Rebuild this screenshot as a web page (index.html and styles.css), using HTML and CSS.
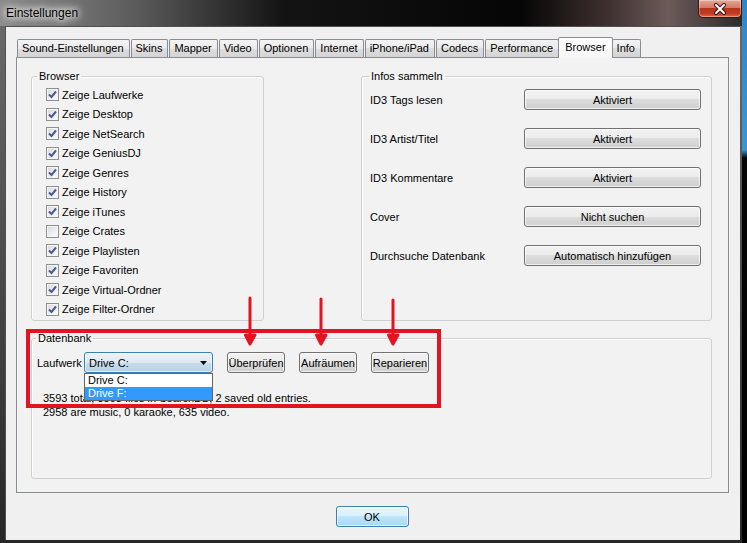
FILE: index.html
```html
<!DOCTYPE html>
<html lang="de">
<head>
    <meta charset="UTF-8">
    <meta name="viewport" content="width=device-width, initial-scale=1.0">
    <title>Einstellungen</title>
    <link rel="stylesheet" href="styles.css">
</head>
<body>
    <div class="window">
        <div class="titlebar">
            <span class="title">Einstellungen</span>
            <button class="close-btn" aria-label="Schließen">
                <svg width="16" height="12" viewBox="0 0 16 12">
                    <path d="M4 2 L12 10 M12 2 L4 10" stroke="#3b1512" stroke-width="4" stroke-linecap="round"/>
                    <path d="M4 2 L12 10 M12 2 L4 10" stroke="#fff" stroke-width="2" stroke-linecap="round"/>
                </svg>
            </button>
        </div>

        <div class="frame">
            <div class="client">
                <ul class="tabs">
                    <li class="tab">Sound-Einstellungen</li>
                    <li class="tab">Skins</li>
                    <li class="tab">Mapper</li>
                    <li class="tab">Video</li>
                    <li class="tab">Optionen</li>
                    <li class="tab">Internet</li>
                    <li class="tab">iPhone/iPad</li>
                    <li class="tab">Codecs</li>
                    <li class="tab">Performance</li>
                    <li class="tab active">Browser</li>
                    <li class="tab">Info</li>
                </ul>

                <div class="panel">
                    <div class="top-row">
                        <fieldset class="group browser-group">
                            <legend>Browser</legend>
                            <label class="check-row"><span class="check"><svg viewBox="0 0 11 11"><path d="M2 5.5 L4.5 8 L9 2.5"/></svg></span>Zeige Laufwerke</label>
                            <label class="check-row"><span class="check"><svg viewBox="0 0 11 11"><path d="M2 5.5 L4.5 8 L9 2.5"/></svg></span>Zeige Desktop</label>
                            <label class="check-row"><span class="check"><svg viewBox="0 0 11 11"><path d="M2 5.5 L4.5 8 L9 2.5"/></svg></span>Zeige NetSearch</label>
                            <label class="check-row"><span class="check"><svg viewBox="0 0 11 11"><path d="M2 5.5 L4.5 8 L9 2.5"/></svg></span>Zeige GeniusDJ</label>
                            <label class="check-row"><span class="check"><svg viewBox="0 0 11 11"><path d="M2 5.5 L4.5 8 L9 2.5"/></svg></span>Zeige Genres</label>
                            <label class="check-row"><span class="check"><svg viewBox="0 0 11 11"><path d="M2 5.5 L4.5 8 L9 2.5"/></svg></span>Zeige History</label>
                            <label class="check-row"><span class="check"><svg viewBox="0 0 11 11"><path d="M2 5.5 L4.5 8 L9 2.5"/></svg></span>Zeige iTunes</label>
                            <label class="check-row"><span class="check"></span>Zeige Crates</label>
                            <label class="check-row"><span class="check"><svg viewBox="0 0 11 11"><path d="M2 5.5 L4.5 8 L9 2.5"/></svg></span>Zeige Playlisten</label>
                            <label class="check-row"><span class="check"><svg viewBox="0 0 11 11"><path d="M2 5.5 L4.5 8 L9 2.5"/></svg></span>Zeige Favoriten</label>
                            <label class="check-row"><span class="check"><svg viewBox="0 0 11 11"><path d="M2 5.5 L4.5 8 L9 2.5"/></svg></span>Zeige Virtual-Ordner</label>
                            <label class="check-row"><span class="check"><svg viewBox="0 0 11 11"><path d="M2 5.5 L4.5 8 L9 2.5"/></svg></span>Zeige Filter-Ordner</label>
                        </fieldset>

                        <fieldset class="group infos-group">
                            <legend>Infos sammeln</legend>
                            <div class="info-row"><span>ID3 Tags lesen</span><button class="btn wide">Aktiviert</button></div>
                            <div class="info-row"><span>ID3 Artist/Titel</span><button class="btn wide">Aktiviert</button></div>
                            <div class="info-row"><span>ID3 Kommentare</span><button class="btn wide">Aktiviert</button></div>
                            <div class="info-row"><span>Cover</span><button class="btn wide">Nicht suchen</button></div>
                            <div class="info-row"><span>Durchsuche Datenbank</span><button class="btn wide">Automatisch hinzufügen</button></div>
                        </fieldset>
                    </div>

                    <fieldset class="group db-group">
                        <legend>Datenbank</legend>
                        <div class="db-row">
                            <span class="db-label">Laufwerk</span>
                            <div class="combo">
                                <span class="combo-value">Drive C:</span>
                                <svg class="combo-arrow" width="7" height="4" viewBox="0 0 7 4"><path d="M0 0 H7 L3.5 4 Z" fill="#000"/></svg>
                                <ul class="combo-list">
                                    <li>Drive C:</li>
                                    <li class="selected">Drive F:</li>
                                </ul>
                            </div>
                            <button class="btn small">Überprüfen</button>
                            <button class="btn small">Aufräumen</button>
                            <button class="btn small">Reparieren</button>
                        </div>
                        <p class="db-stats">3593 total, 3593 files in SearchDB, 2 saved old entries.<br>2958 are music, 0 karaoke, 635 video.</p>
                    </fieldset>
                </div>

                <div class="footer">
                    <button class="btn default">OK</button>
                </div>
            </div>
        </div>

        <!-- red markup drawn on top of the dialog -->
        <svg class="markup" width="747" height="543" viewBox="0 0 747 543">
            <rect x="28" y="331" width="411" height="75" fill="none" stroke="#e3141f" stroke-width="4"/>
            <g stroke="#e3141f" fill="#e3141f" stroke-width="3" stroke-linecap="round" stroke-linejoin="round">
                <path d="M250 298 V336"/>
                <path d="M245.5 335 H255 L250 344 Z"/>
                <path d="M321 299 V336"/>
                <path d="M316.5 335 H326 L321 344 Z"/>
                <path d="M393 300 V336"/>
                <path d="M388.5 335 H398 L393 344 Z"/>
            </g>
        </svg>
    </div>
</body>
</html>
```

FILE: styles.css
```css
body {
    margin: 0;
    width: 747px;
    height: 543px;
    overflow: hidden;
    background: linear-gradient(180deg, #2f86c4 0, #3a96d2 150px, #050505 158px, #000 100%);
    font-family: "Liberation Sans", Arial, sans-serif;
    font-size: 11px;
    color: #000;
}
.window {
    position: relative;
    width: 742px;
    height: 543px;
    background: linear-gradient(180deg, #6d6d6d 0, #4a4a4a 50%, #262626 100%);
}
.titlebar {
    height: 26px;
    display: flex;
    justify-content: space-between;
    align-items: flex-start;
    padding-left: 6px;
    box-sizing: border-box;
    background: linear-gradient(90deg, #8c8c8c 0, #5c5c5c 18%, #141414 38%, #050505 70%, #3e3130 82%, #6d5b59 90%, #2b2b2b 100%);
}
.title {
    margin-top: 6px;
    font-size: 12px;
    line-height: 14px;
    color: #000;
    text-shadow: 0 0 6px #fff, 0 0 10px #fff, 0 0 12px #fff;
}
.close-btn {
    width: 44px;
    height: 18px;
    padding: 0;
    border: 1px solid #3d1510;
    border-top: none;
    border-radius: 0 0 5px 5px;
    background: linear-gradient(180deg, #e6a898 0, #d47a66 45%, #b8321c 50%, #c43b22 80%, #e36a45 100%);
    box-shadow: inset 0 0 0 1px rgba(255, 255, 255, 0.35);
    display: flex;
    align-items: center;
    justify-content: center;
}
.frame {
    display: flex;
    padding: 0 2px 3px 5px;
}
.client {
    width: 735px;
    height: 514px;
    box-sizing: border-box;
    padding: 11px 12px 0 10px;
    background: #f0f0f0;
    border-top: 1px solid #505050;
    border-left: 1px solid #505050;
}
.tabs {
    display: flex;
    align-items: flex-end;
    height: 20px;
    margin: -1px 0 0 1px;
    padding: 0;
    list-style: none;
}
.tab {
    height: 18px;
    line-height: 17px;
    box-sizing: border-box;
    padding: 0 5px 0 4px;
    margin-right: 1px;
    border: 1px solid #898c95;
    border-bottom: none;
    border-radius: 2px 2px 0 0;
    background: linear-gradient(180deg, #f3f3f3 0, #ebebeb 50%, #dedede 50%, #d4d4d4 100%);
    white-space: nowrap;
}
.tab.active {
    height: 21px;
    line-height: 18px;
    margin: 0 0 -1px -2px;
    padding: 0 6px;
    position: relative;
    z-index: 1;
    background: linear-gradient(180deg, #ffffff 0, #f6f6f6 100%);
}
.tab.active + .tab {
    margin-left: -1px;
}
.panel {
    width: 713px;
    height: 436px;
    box-sizing: border-box;
    padding: 12px 16px 0 14px;
    border: 1px solid #898c95;
    background: #f2f2f2;
}
.group {
    margin: 0;
    min-width: 0;
    box-sizing: border-box;
    border: 1px solid #d0d0d0;
    border-radius: 3px;
    box-shadow: inset 1px 1px 0 #fff;
}
.group legend {
    padding: 0 2px;
    line-height: 13px;
    color: #000;
}
.top-row {
    display: grid;
    grid-template-columns: 233px 351px;
    column-gap: 97px;
}
.browser-group {
    padding: 2px 0 1px 14px;
}
.browser-group legend {
    margin-left: -9px;
}
.check-row {
    display: flex;
    align-items: center;
    gap: 3px;
    height: 19.5px;
}
.check {
    width: 13px;
    height: 13px;
    box-sizing: border-box;
    border: 1px solid #8e8f8f;
    background: linear-gradient(135deg, #d8d8d8 0, #f0f0f0 60%, #fbfbfb 100%);
    box-shadow: inset 0 0 0 1px #f6f6f6;
}
.check svg {
    display: block;
    width: 11px;
    height: 11px;
    fill: none;
    stroke: #4a5a96;
    stroke-width: 2;
}
.infos-group {
    padding: 6px 10px 0 8px;
}
.infos-group legend {
    margin-left: -1px;
}
.info-row {
    display: flex;
    justify-content: space-between;
    align-items: center;
    height: 21px;
    margin-bottom: 18px;
}
.btn {
    height: 21px;
    padding: 0;
    box-sizing: border-box;
    border: 1px solid #707070;
    border-radius: 3px;
    background: linear-gradient(180deg, #f2f2f2 0, #ebebeb 50%, #dddddd 50%, #cfcfcf 100%);
    box-shadow: inset 0 0 0 1px rgba(255, 255, 255, 0.7);
    font: inherit;
    color: #000;
}
.btn.wide {
    width: 177px;
}
.btn.small {
    width: 58px;
}
.btn.default {
    width: 73px;
    border-color: #3c7fb1;
    background: linear-gradient(180deg, #eaf6fd 0, #d9f0fc 50%, #bee6fd 50%, #a7d9f5 100%);
}
.db-group {
    height: 147px;
    margin-top: 11px;
    padding: 7px 0 0 5px;
}
.db-group legend {
    margin-left: -1px;
}
.db-row {
    display: flex;
    align-items: center;
    height: 21px;
}
.db-label {
    width: 47px;
    overflow: hidden;
    white-space: nowrap;
}
.combo {
    position: relative;
    width: 129px;
    height: 21px;
    box-sizing: border-box;
    margin-right: 14px;
    padding: 0 5px 0 4px;
    display: flex;
    align-items: center;
    justify-content: space-between;
    border: 1px solid #3c7fb1;
    border-radius: 3px;
    background: linear-gradient(180deg, #e9f3fa 0, #dde9f2 50%, #c7dceb 50%, #b9d2e4 100%);
    box-shadow: inset 0 0 0 1px rgba(255, 255, 255, 0.6);
}
.combo-list {
    position: absolute;
    top: 20px;
    left: -1px;
    width: 129px;
    box-sizing: border-box;
    margin: 0;
    padding: 0;
    list-style: none;
    border: 1px solid #646464;
    background: #fff;
    z-index: 2;
}
.combo-list li {
    height: 13px;
    line-height: 13px;
    padding-left: 3px;
}
.combo-list li.selected {
    background: #3399ff;
    color: #fff;
}
.db-row .btn.small + .btn.small {
    margin-left: 14px;
}
.db-stats {
    margin: 18px 0 0 6px;
    line-height: 14px;
}
.footer {
    display: flex;
    justify-content: center;
    padding-top: 13px;
}
.markup {
    position: absolute;
    top: 0;
    left: 0;
    pointer-events: none;
    z-index: 5;
}
```
